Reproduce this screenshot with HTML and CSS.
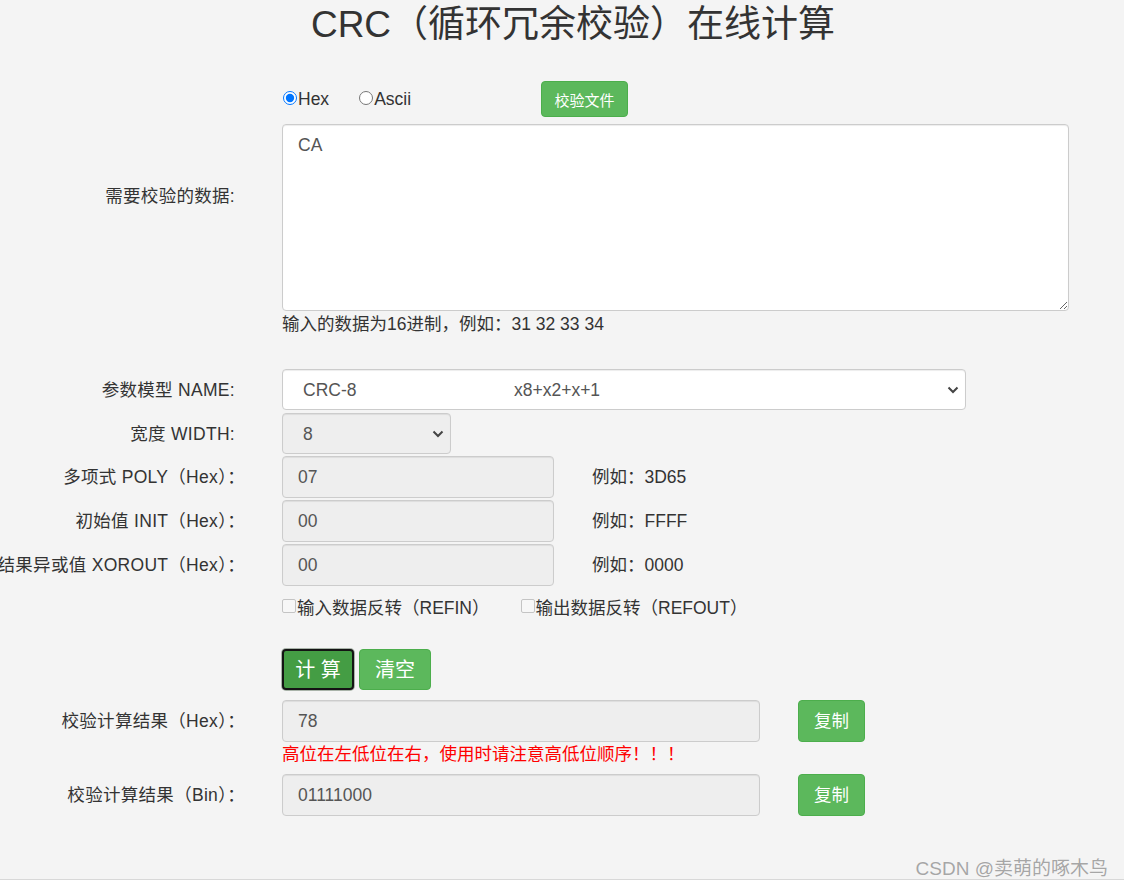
FILE: index.html
```html
<!DOCTYPE html>
<html lang="zh-CN">
<head>
<meta charset="utf-8">
<title>CRC（循环冗余校验）在线计算</title>
<link rel="stylesheet" href="styles.css">
</head>
<body>
<div class="page">
  <h2 class="title">CRC（循环冗余校验）在线计算</h2>
  <div class="form">
    <div class="row data-row">
      <div class="lbl">需要校验的数据:</div>
      <div class="field">
        <div class="radio-line">
          <label class="radio"><input type="radio" name="fmt" checked>Hex</label>
          <label class="radio radio-ascii"><input type="radio" name="fmt">Ascii</label>
          <button class="btn btn-sm">校验文件</button>
        </div>
        <textarea class="ta">CA</textarea>
      </div>
    </div>
    <div class="row hint-row">
      <div class="lbl"></div>
      <div class="hint">输入的数据为16进制，例如：31 32 33 34</div>
    </div>

    <div class="row name-row">
      <div class="lbl">参数模型 NAME:</div>
      <div class="select select-name">
        <span class="opt-name">CRC-8</span><span class="opt-poly">x8+x2+x+1</span>
        <svg class="chev" width="12" height="8" viewBox="0 0 12 8"><path d="M1.5 1.5 L6 6 L10.5 1.5" fill="none" stroke="#444" stroke-width="2"/></svg>
      </div>
    </div>
    <div class="row width-row">
      <div class="lbl">宽度 WIDTH:</div>
      <div class="select select-width">
        <span class="opt-name">8</span>
        <svg class="chev" width="12" height="8" viewBox="0 0 12 8"><path d="M1.5 1.5 L6 6 L10.5 1.5" fill="none" stroke="#444" stroke-width="2"/></svg>
      </div>
    </div>
    <div class="row param-row">
      <div class="lbl"><span class="fw">多项式 POLY（Hex）：</span></div>
      <input class="inp inp-short" type="text" value="07" disabled>
      <div class="example">例如：3D65</div>
    </div>
    <div class="row param-row">
      <div class="lbl"><span class="fw">初始值 INIT（Hex）：</span></div>
      <input class="inp inp-short" type="text" value="00" disabled>
      <div class="example">例如：FFFF</div>
    </div>
    <div class="row param-row">
      <div class="lbl"><span class="fw">结果异或值 XOROUT（Hex）：</span></div>
      <input class="inp inp-short" type="text" value="00" disabled>
      <div class="example">例如：0000</div>
    </div>
    <div class="row check-row">
      <div class="lbl"></div>
      <div class="checks">
        <label class="check"><input type="checkbox">输入数据反转（REFIN）</label>
        <label class="check"><input type="checkbox">输出数据反转（REFOUT）</label>
      </div>
    </div>
    <div class="row btn-row">
      <div class="lbl"></div>
      <div class="btns">
        <button class="btn btn-big btn-focus">计 算</button>
        <button class="btn btn-big">清空</button>
      </div>
    </div>
    <div class="row result-row">
      <div class="lbl"><span class="fw">校验计算结果（Hex）：</span></div>
      <input class="inp inp-result" type="text" value="78" disabled>
      <button class="btn btn-copy">复制</button>
    </div>
    <div class="row warn-row">
      <div class="lbl"></div>
      <div class="warn">高位在左低位在右，使用时请注意高低位顺序！！！</div>
    </div>
    <div class="row result-row bin-row">
      <div class="lbl"><span class="fw">校验计算结果（Bin）：</span></div>
      <input class="inp inp-result" type="text" value="01111000" disabled>
      <button class="btn btn-copy">复制</button>
    </div>
  </div>
  <div class="watermark">CSDN @卖萌的啄木鸟</div>
</div>
</body>
</html>
```
FILE: styles.css
```css
html {
  background: #ffffff;
}
body {
  margin: 0;
  font-family: "Liberation Sans", "Noto Sans CJK SC", sans-serif;
  font-size: 17.5px;
  color: #333333;
}
.page {
  position: relative;
  height: 880px;
  box-sizing: border-box;
  background: #f4f4f4;
  border-bottom: 1px solid #d8d8d8;
  overflow: hidden;
}
.title {
  margin: 4px 0 0 0;
  padding-left: 22px;
  text-align: center;
  font-size: 37px;
  font-weight: normal;
  line-height: 41px;
  color: #333333;
}
.form {
  padding-top: 36px;
}
.row {
  display: flex;
  align-items: center;
  gap: 47px;
  line-height: 24px;
}
.lbl {
  width: 235px;
  flex: none;
  display: flex;
  justify-content: flex-end;
  white-space: nowrap;
  letter-spacing: 0.3px;
}
.fw {
  margin-right: -10px;
}
.field {
  display: flex;
  flex-direction: column;
}
.radio-line {
  display: flex;
  align-items: center;
  height: 36px;
}
.radio {
  display: flex;
  align-items: center;
}
.radio input {
  flex: none;
  margin: 0 1px 3px 1px;
  width: 14px;
  height: 14px;
}
.radio-ascii {
  margin-left: 29px;
}
.btn {
  font-family: inherit;
  color: #ffffff;
  background: #5cb85c;
  border: 1px solid #4cae4c;
  border-radius: 4px;
  cursor: pointer;
  padding: 0;
}
.btn-sm {
  margin-left: 130px;
  width: 87px;
  height: 36px;
  font-size: 15px;
}
.ta {
  margin-top: 7px;
  width: 787px;
  height: 187px;
  box-sizing: border-box;
  padding: 8px 15px;
  border: 1px solid #cccccc;
  border-radius: 4px;
  background: #ffffff;
  font-family: inherit;
  font-size: 17.5px;
  line-height: 25px;
  color: #555555;
  box-shadow: inset 0 1px 1px rgba(0, 0, 0, 0.075);
}
.hint-row {
  margin-top: 1px;
}
.select {
  display: flex;
  align-items: center;
  box-sizing: border-box;
  height: 41px;
  border: 1px solid #cccccc;
  border-radius: 4px;
  padding-left: 20px;
  padding-right: 6px;
  color: #555555;
  box-shadow: inset 0 1px 1px rgba(0, 0, 0, 0.075);
}
.select-name {
  width: 684px;
  background: #ffffff;
}
.select-width {
  width: 169px;
  background: #eeeeee;
}
.opt-name {
  width: 211px;
  flex: none;
}
.select-width .opt-name {
  width: auto;
  flex: 1;
}
.opt-poly {
  flex: 1;
}
.chev {
  flex: none;
}
.name-row {
  margin-top: 33px;
}
.width-row {
  margin-top: 3px;
}
.param-row {
  margin-top: 2px;
  gap: 0;
}
.param-row .lbl,
.result-row .lbl {
  margin-right: 47px;
}
.inp {
  box-sizing: border-box;
  height: 42px;
  padding: 0 15px;
  border: 1px solid #cccccc;
  border-radius: 4px;
  background: #eeeeee;
  font-family: inherit;
  font-size: 17.5px;
  color: #555555;
  box-shadow: inset 0 1px 1px rgba(0, 0, 0, 0.075);
}
.inp-short {
  width: 272px;
}
.example {
  margin-left: 38px;
}
.check-row {
  margin-top: 10px;
}
.checks {
  display: flex;
  gap: 31px;
}
.check {
  display: flex;
  align-items: center;
}
.check input {
  flex: none;
  appearance: none;
  -webkit-appearance: none;
  margin: 0 1px 4px 0;
  width: 14px;
  height: 14px;
  box-sizing: border-box;
  border: 1px solid #c4c4c4;
  border-radius: 2px;
  background: #f7f7f7;
}
.btn-row {
  margin-top: 29px;
}
.btns {
  display: flex;
  gap: 5px;
}
.btn-big {
  width: 72px;
  height: 41px;
  font-size: 20px;
  line-height: 36px;
}
.btn-focus {
  background: #449d44;
  border: 2px solid #141414;
  box-shadow: 0 0 0 1px #a9b3a9;
}
.result-row {
  margin-top: 10px;
  gap: 0;
}
.inp-result {
  width: 478px;
}
.btn-copy {
  margin-left: 38px;
  width: 67px;
  height: 42px;
  font-size: 17.5px;
  line-height: 36px;
}
.warn-row {
  margin-top: 0;
}
.warn {
  color: #ff0000;
}
.bin-row {
  margin-top: 8px;
}
.watermark {
  position: absolute;
  right: 16px;
  bottom: 1px;
  font-size: 19px;
  line-height: 18px;
  color: #a6a6a6;
  text-shadow: 0 0 1px #ffffff;
}
```
